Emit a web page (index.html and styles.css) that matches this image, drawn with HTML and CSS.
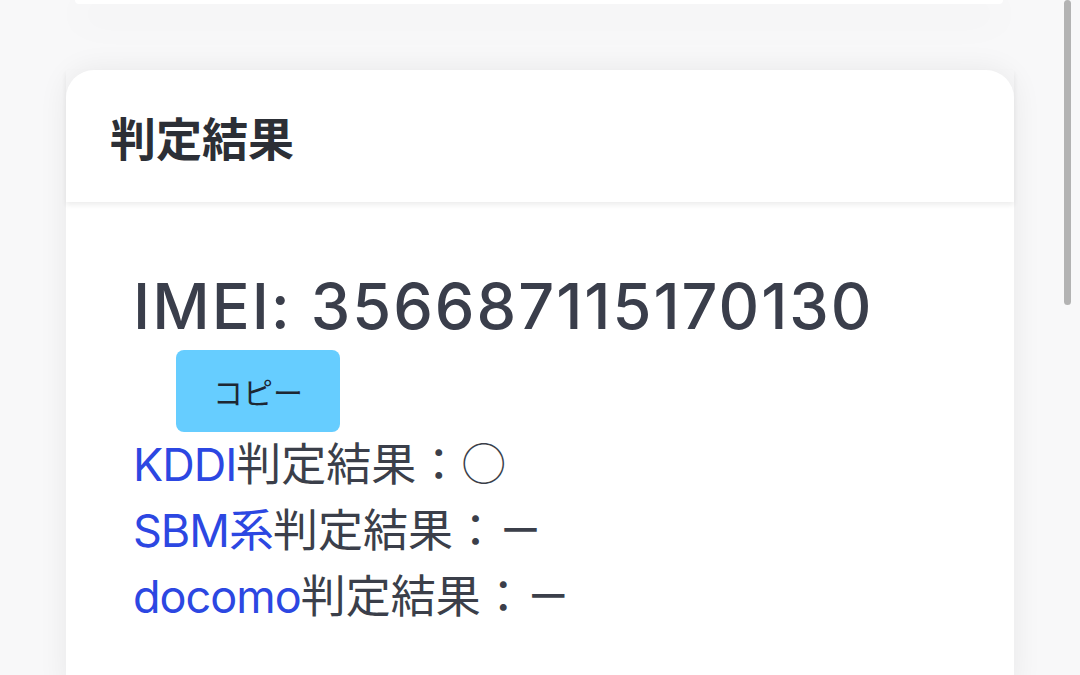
FILE: index.html
```html
<!DOCTYPE html>
<html lang="ja">
<head>
<meta charset="utf-8">
<link rel="stylesheet" href="styles.css">
</head>
<body>
<div class="page">
  <div class="card-top"></div>
  <div class="card">
    <div class="card-header">判定結果</div>
    <div class="card-body">
      <div class="imei">IMEI: 356687115170130</div>
      <button class="copy">コピー</button>
      <div class="results">
        <div class="row"><span class="carrier">KDDI</span>判定結果：<span class="mark circle">○</span></div>
        <div class="row"><span class="carrier">SBM系</span>判定結果：<span class="mark">－</span></div>
        <div class="row"><span class="carrier">docomo</span>判定結果：<span class="mark">－</span></div>
      </div>
    </div>
  </div>
</div>
<div class="scrollbar"></div>
</body>
</html>
```
FILE: styles.css
```css
html, body {
  margin: 0;
  padding: 0;
  height: 100%;
  overflow: hidden;
}
body {
  background: #f8f8f9;
  font-family: Inter, "Noto Sans CJK JP", sans-serif;
  color: #3b3f4a;
}
.page {
  display: flex;
  flex-direction: column;
  align-items: flex-start;
}
.card-top {
  margin-left: 75px;
  width: 928px;
  height: 4px;
  background: #fff;
  border-radius: 0 0 26px 26px;
  box-shadow: 0 12px 40px rgba(0, 0, 0, 0.13);
}
.card {
  margin-left: 66px;
  margin-top: 66px;
  width: 948px;
  background: #fff;
  border-radius: 28px 28px 0 0;
  box-shadow: 0 0 30px rgba(0, 0, 0, 0.07);
}
.card-header {
  height: 132px;
  box-shadow: 0 3px 5px rgba(0, 0, 0, 0.07);
  display: flex;
  align-items: center;
  padding-left: 44px;
  font-family: "Noto Sans CJK JP", sans-serif;
  font-weight: 700;
  font-size: 46px;
  color: #2c2f36;
}
.card-body {
  padding: 62px 0 60px 67px;
  display: flex;
  flex-direction: column;
  align-items: flex-start;
}
.imei {
  font-size: 63px;
  line-height: 84px;
  font-weight: 500;
  letter-spacing: 2px;
  color: #3a3e4b;
  white-space: nowrap;
}
.copy {
  margin-left: 43px;
  margin-top: 2px;
  width: 164px;
  height: 82px;
  border: none;
  border-radius: 8px;
  background: #66cdff;
  color: #1d2733;
  font-family: "Noto Sans CJK JP", sans-serif;
  font-size: 30px;
  padding: 0;
}
.results {
  display: flex;
  flex-direction: column;
}
.row {
  font-size: 45px;
  line-height: 66px;
  color: #3b3f4a;
  white-space: nowrap;
}
.carrier {
  color: #2c47e2;
  letter-spacing: -1px;
}
.mark {
  font-family: "Noto Sans CJK JP", sans-serif;
  font-weight: 500;
  line-height: 1;
}
.circle {
  font-weight: 300;
}
.scrollbar {
  position: absolute;
  top: 0;
  right: 9px;
  width: 7px;
  height: 305px;
  border-radius: 4px;
  background: #b3b3b3;
}
```
